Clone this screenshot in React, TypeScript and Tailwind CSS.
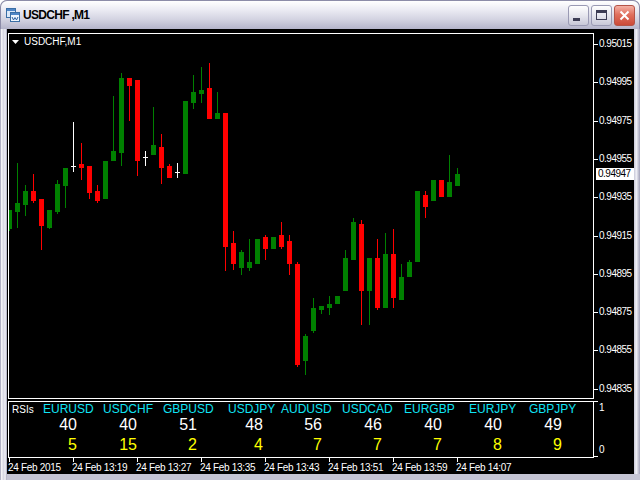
// App.tsx - MT4 style chart window with RSI panel
type Candle = [number, number, number, number, number, 'g' | 'r' | 'w'];

// [center x, body top, body bottom, wick top, wick bottom, colour] in page pixels
const candles: Candle[] = [
  [9, 210, 228, 210, 230, 'g'],
  [17, 203, 211, 163, 227, 'g'],
  [25, 191, 204, 185, 215, 'g'],
  [33, 191, 200, 174, 202, 'r'],
  [41, 199, 225, 199, 249, 'r'],
  [49, 210, 227, 210, 228, 'g'],
  [57, 184, 211, 180, 213, 'g'],
  [65, 168, 185, 168, 207, 'g'],
  [73, 166, 166, 122, 171, 'w'],
  [81, 164, 167, 143, 179, 'r'],
  [89, 166, 192, 166, 198, 'r'],
  [97, 191, 200, 185, 202, 'r'],
  [105, 161, 198, 161, 198, 'g'],
  [113, 151, 160, 96, 160, 'g'],
  [121, 78, 152, 73, 165, 'g'],
  [129, 78, 85, 78, 120, 'r'],
  [137, 80, 160, 80, 175, 'r'],
  [145, 157, 157, 151, 165, 'w'],
  [153, 145, 154, 107, 154, 'g'],
  [161, 147, 167, 134, 183, 'r'],
  [169, 166, 177, 164, 177, 'r'],
  [177, 172, 172, 163, 177, 'w'],
  [185, 101, 173, 101, 173, 'g'],
  [193, 92, 102, 75, 108, 'g'],
  [201, 90, 93, 67, 102, 'g'],
  [209, 88, 118, 63, 118, 'r'],
  [217, 113, 118, 92, 118, 'g'],
  [225, 113, 246, 113, 270, 'r'],
  [233, 243, 263, 231, 269, 'r'],
  [241, 252, 267, 250, 274, 'g'],
  [249, 262, 267, 239, 270, 'g'],
  [257, 239, 263, 239, 263, 'g'],
  [265, 237, 248, 235, 259, 'r'],
  [273, 237, 248, 237, 248, 'g'],
  [281, 235, 246, 222, 248, 'r'],
  [289, 241, 263, 235, 274, 'r'],
  [297, 264, 364, 262, 366, 'r'],
  [305, 336, 360, 334, 374, 'g'],
  [313, 308, 330, 298, 332, 'g'],
  [321, 306, 309, 306, 313, 'g'],
  [329, 304, 307, 296, 314, 'g'],
  [337, 296, 303, 296, 303, 'g'],
  [345, 258, 290, 250, 290, 'g'],
  [353, 222, 259, 218, 259, 'g'],
  [361, 224, 290, 220, 324, 'r'],
  [369, 258, 290, 258, 324, 'g'],
  [377, 258, 307, 239, 309, 'r'],
  [385, 254, 307, 233, 307, 'g'],
  [393, 254, 297, 229, 307, 'r'],
  [401, 277, 299, 264, 299, 'g'],
  [409, 262, 276, 260, 276, 'g'],
  [417, 191, 261, 191, 261, 'g'],
  [425, 195, 206, 191, 217, 'r'],
  [433, 180, 200, 180, 200, 'g'],
  [441, 180, 196, 180, 196, 'r'],
  [449, 182, 196, 155, 196, 'g'],
  [457, 174, 185, 168, 185, 'g'],
];

const colours = { g: '#008000', r: '#ff0000', w: '#ffffff' };

const prices = ['0.95015', '0.94995', '0.94975', '0.94955', '0.94935', '0.94915', '0.94895', '0.94875', '0.94855', '0.94835'];
const priceY = [44, 82, 121, 159, 197, 236, 274, 312, 350, 389];

const symbols = ['EURUSD', 'USDCHF', 'GBPUSD', 'USDJPY', 'AUDUSD', 'USDCAD', 'EURGBP', 'EURJPY', 'GBPJPY'];
const rsi = ['40', '40', '51', '48', '56', '46', '40', '40', '49'];
const counts = ['5', '15', '2', '4', '7', '7', '7', '8', '9'];

const times = ['24 Feb 2015', '24 Feb 13:19', '24 Feb 13:27', '24 Feb 13:35', '24 Feb 13:43', '24 Feb 13:51', '24 Feb 13:59', '24 Feb 14:07'];

function WindowIcon() {
  return (
    <svg width="14" height="14" viewBox="0 0 14 14" shapeRendering="crispEdges">
      <rect x="0.5" y="0.5" width="9" height="9" fill="#dbe8f8" stroke="#3a6ea5" />
      <rect x="1" y="1" width="8" height="2" fill="#4f86c6" />
      <rect x="4.5" y="4.5" width="9" height="9" fill="#eef5fd" stroke="#3a6ea5" />
      <rect x="5" y="5" width="8" height="2" fill="#4f86c6" />
      <path d="M6 9 L7.5 12 L9 9.5 L10.5 12 L12 9" fill="none" stroke="#2a5fa0" strokeWidth="1" shapeRendering="auto" />
    </svg>
  );
}

function TitleButton({ kind }: { kind: 'min' | 'max' | 'close' }) {
  if (kind === 'close') {
    return (
      <div className="w-[21px] h-[21px] rounded-[3px] border border-[#b45448] bg-[linear-gradient(#f4b1a5,#e0705e_45%,#cc4a38)] flex items-center justify-center">
        <svg width="11" height="11" viewBox="0 0 11 11">
          <path d="M1.5 1.5 L9.5 9.5 M9.5 1.5 L1.5 9.5" stroke="#fff" strokeWidth="2" />
        </svg>
      </div>
    );
  }
  return (
    <div className="w-[21px] h-[21px] rounded-[3px] border border-[#9a9ab4] bg-[linear-gradient(#ffffff,#e6e6ee_50%,#c8c8d8)] flex items-center justify-center">
      {kind === 'min' ? (
        <div className="w-[7px] h-[3px] bg-[#3c3c54] mt-[8px] -ml-[4px]" />
      ) : (
        <div className="w-[11px] h-[10px] border border-[#3c3c54] border-t-[3px]" />
      )}
    </div>
  );
}

function CandleChart() {
  return (
    <svg className="block" width="584" height="364" viewBox="9 34 584 364" shapeRendering="crispEdges">
      {candles.map(([x, bt, bb, wt, wb, c]) => (
        <g key={x} fill={colours[c]}>
          <rect x={x} y={wt} width={1} height={wb - wt + 1} />
          <rect x={x - 2} y={bt} width={5} height={bb - bt + 1} />
        </g>
      ))}
    </svg>
  );
}

export default function App() {
  return (
    <div className="w-[640px] h-[480px] bg-white font-['Liberation_Sans',Arial,sans-serif] overflow-hidden">
      <div className="w-[640px] h-[480px] rounded-t-[7px] bg-[#c4c4d4] flex flex-col">
        {/* Title bar */}
        <div className="h-[29px] shrink-0 rounded-t-[7px] border border-b-0 border-[#8c8ca8] bg-[linear-gradient(#ffffff,#ececf4_30%,#d4d4e2_65%,#b4b4ca)] flex items-center pl-[5px] pr-[4px]">
          <WindowIcon />
          <span className="ml-[3px] text-[12px] font-bold tracking-[-0.7px] text-black">USDCHF ,M1</span>
          <div className="ml-auto flex gap-[2px]">
            <TitleButton kind="min" />
            <TitleButton kind="max" />
            <TitleButton kind="close" />
          </div>
        </div>

        {/* Frame + client */}
        <div className="flex-1 flex bg-[linear-gradient(90deg,#8c8ca8,#f4f4f8_20%,#d8d8e4_50%,#f0f0f6_75%,#a0a0b8)] pb-[6px] bg-[length:7px_100%] bg-no-repeat">
          <div className="w-[7px] shrink-0" />
          <div className="w-[627px] h-[445px] bg-black flex flex-col">
            {/* Main chart row */}
            <div className="flex mt-[4px]">
              <div className="ml-px w-[586px] h-[366px] border border-white relative">
                <CandleChart />
                <div className="absolute left-[3px] top-[2px] flex items-center text-white text-[10px] leading-[12px]">
                  <svg width="7" height="4" viewBox="0 0 7 4" className="mr-[5px]">
                    <path d="M0 0 H7 L3.5 4 Z" fill="#fff" />
                  </svg>
                  USDCHF,M1
                </div>
              </div>
              <div className="w-[40px] relative text-white text-[10px] leading-[12px] tracking-[-0.5px]">
                {prices.map((p, i) => (
                  <div key={p} className="absolute left-0 flex items-center" style={{ top: priceY[i] - 33 - 6 }}>
                    <div className="w-[4px] h-px bg-white" />
                    <span className="ml-[1px]">{p}</span>
                  </div>
                ))}
                <div className="absolute left-[2px] top-[135px] w-[38px] h-[12px] bg-white text-black pl-[2px] leading-[12px]">0.94947</div>
              </div>
            </div>

            {/* RSI panel row */}
            <div className="flex mt-[2px]">
              <div className="ml-px w-[586px] h-[57px] border border-white flex flex-col">
                <div className="flex h-[14px] items-center">
                  <span className="w-[34px] pl-[3px] text-white text-[10px]">RSIs</span>
                  <div className="grid grid-cols-[60px_60px_65px_53px_61px_62px_65px_60px_60px] text-[12px] leading-[14px] text-[#10e4f4]">
                    {symbols.map((s) => (
                      <span key={s}>{s}</span>
                    ))}
                  </div>
                </div>
                <div className="grid grid-cols-[60px_60px_60px_66px_59px_60px_60px_60px_60px] pl-[8px] text-[16px] leading-[18px] text-white text-right">
                  {rsi.map((v, i) => (
                    <span key={i}>{v}</span>
                  ))}
                </div>
                <div className="grid grid-cols-[60px_60px_60px_66px_59px_60px_60px_60px_60px] pl-[8px] mt-[2px] text-[16px] leading-[18px] text-[#ffff00] text-right">
                  {counts.map((v, i) => (
                    <span key={i}>{v}</span>
                  ))}
                </div>
              </div>
              <div className="w-[40px] relative text-white text-[10px] leading-[12px]">
                <div className="absolute left-0 top-0 w-[4px] h-px bg-white" />
                <span className="absolute left-[5px] top-[1px]">1</span>
                <div className="absolute left-0 top-[55px] w-[4px] h-px bg-white" />
                <span className="absolute left-[5px] top-[43px]">0</span>
              </div>
            </div>

            {/* Time axis */}
            <div className="flex pl-[1px] text-white text-[10px] leading-[11px]">
              {times.map((t) => (
                <div key={t} className="w-[64px] flex flex-col">
                  <div className="ml-px w-px h-[4px] bg-white" />
                  <span className="tracking-[-0.3px]">{t}</span>
                </div>
              ))}
            </div>
          </div>
          <div className="w-[6px] shrink-0 bg-[linear-gradient(90deg,#c8c8d8,#f0f0f6_40%,#a0a0b8)]" />
        </div>
      </div>
    </div>
  );
}
